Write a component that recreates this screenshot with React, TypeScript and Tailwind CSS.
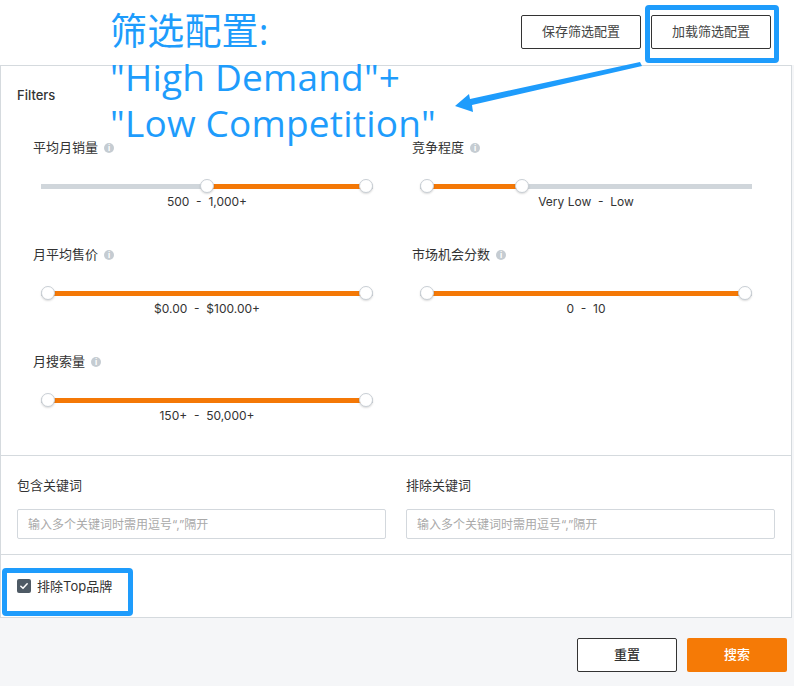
import React from 'react'

const ui = { fontFamily: 'Inter, "Noto Sans CJK SC", sans-serif' }

type SliderProps = {
  label: string
  from: number
  to: number
  text: string
}

const sliders: SliderProps[] = [
  { label: '平均月销量', from: 50, to: 100, text: '500  -  1,000+' },
  { label: '竞争程度', from: 0, to: 30, text: 'Very Low  -  Low' },
  { label: '月平均售价', from: 0, to: 100, text: '$0.00  -  $100.00+' },
  { label: '市场机会分数', from: 0, to: 100, text: '0  -  10' },
  { label: '月搜索量', from: 0, to: 100, text: '150+  -  50,000+' },
]

function InfoIcon() {
  return (
    <span className="ml-[6px] inline-flex h-[10px] w-[10px] items-center justify-center rounded-full bg-[#c5ccd2] text-[8px] font-bold leading-none text-white">
      i
    </span>
  )
}

function RangeSlider({ label, from, to, text }: SliderProps) {
  return (
    <div>
      <div className="flex h-[20px] items-center text-[13px] text-[#333]">
        <span>{label}</span>
        <InfoIcon />
      </div>
      <div className="mx-2 mt-[21px]">
        <div className="relative h-[14px]">
          <div className="absolute left-0 right-0 top-[5px] h-[5px] bg-[#d0d6db]" />
          <div className="absolute left-[7px] right-[7px] top-0 h-[14px]">
            <div
              className="absolute top-[5px] h-[5px] bg-[#f47806]"
              style={{ left: `${from}%`, width: `${to - from}%` }}
            />
            <div
              className="absolute top-0 h-[14px] w-[14px] -translate-x-1/2 rounded-full border border-[#c9cfd5] bg-white shadow-[0_1px_2px_rgba(0,0,0,0.15)]"
              style={{ left: `${from}%` }}
            />
            <div
              className="absolute top-0 h-[14px] w-[14px] -translate-x-1/2 rounded-full border border-[#c9cfd5] bg-white shadow-[0_1px_2px_rgba(0,0,0,0.15)]"
              style={{ left: `${to}%` }}
            />
          </div>
        </div>
        <div className="mt-[1px] h-[16px] whitespace-pre text-center text-[12px] leading-[16px] text-[#333]">{text}</div>
      </div>
    </div>
  )
}

function KeywordInput({ label }: { label: string }) {
  return (
    <div>
      <div className="h-[20px] text-[13px] leading-[20px] text-[#333]">{label}</div>
      <input
        className="mt-[14px] h-[30px] w-full rounded-[2px] border border-[#d3d8dd] px-[10px] text-[12px] placeholder:text-[#a9a9a9] outline-none"
        placeholder={'输入多个关键词时需用逗号“,”隔开'}
      />
    </div>
  )
}

export default function App() {
  return (
    <div className="relative min-h-[686px] w-[794px] bg-[#f5f6f8]" style={ui}>
      {/* header */}
      <div className="flex h-[65px] items-start justify-end gap-[10px] bg-white pr-[23px] pt-[15px]">
        <button className="h-[34px] w-[120px] rounded-[2px] border border-[#333] bg-white text-[13px] text-[#444]">
          保存筛选配置
        </button>
        <button className="h-[34px] w-[120px] rounded-[2px] border border-[#333] bg-white text-[13px] text-[#444]">
          加载筛选配置
        </button>
      </div>

      {/* panel */}
      <div className="w-[792px] border border-[#d5dade] bg-white">
        <div className="border-b border-[#d5dade] px-4 pb-[31px] pt-[19px]">
          <div className="h-[20px] text-[13px] font-medium leading-[20px] text-[#333]">Filters</div>
          <div className="mt-[33px] grid grid-cols-[348px_348px] gap-x-[31px] gap-y-[35px] px-4">
            {sliders.map((s) => (
              <RangeSlider key={s.label} {...s} />
            ))}
          </div>
        </div>

        <div className="grid grid-cols-2 gap-5 border-b border-[#d5dade] px-4 pb-[15px] pt-[19px]">
          <KeywordInput label="包含关键词" />
          <KeywordInput label="排除关键词" />
        </div>

        <div className="h-[62px] px-4 pt-[24px]">
          <label className="flex items-center gap-[6px] text-[13px] text-[#333]">
            <span className="flex h-[14px] w-[14px] items-center justify-center rounded-[2px] bg-[#4e5a65]">
              <svg viewBox="0 0 12 12" className="h-[10px] w-[10px]" fill="none" stroke="white" strokeWidth="1.8" strokeLinecap="round" strokeLinejoin="round">
                <path d="M2.2 6.3 4.8 8.8 9.8 3.4" />
              </svg>
            </span>
            <span className="leading-[14px]">排除Top品牌</span>
          </label>
        </div>
      </div>

      {/* footer */}
      <div className="flex justify-end gap-[10px] pr-[7px] pt-[20px]">
        <button className="h-[34px] w-[100px] rounded-[2px] border border-[#333] bg-white text-[13px] font-medium text-[#333]">
          重置
        </button>
        <button className="h-[34px] w-[100px] rounded-[2px] bg-[#f57a06] text-[13px] font-medium text-white">
          搜索
        </button>
      </div>

      {/* annotation overlay */}
      <div
        className="pointer-events-none absolute left-[110px] top-[8px] text-[37px] leading-[46px] tracking-[0.2px] text-[#1e9cfc]"
        style={{ fontFamily: '"Open Sans", "Noto Sans CJK SC", sans-serif' }}
      >
        <div>筛选配置:</div>
        <div>"High Demand"+</div>
        <div>"Low Competition"</div>
      </div>
      <svg className="pointer-events-none absolute left-0 top-0" width="794" height="686">
        <polygon points="640,62 642,66 472,105 473,112 455,106 469,94 470,99" fill="#1e9cfc" />
      </svg>
      <div className="pointer-events-none absolute left-[645px] top-[5px] h-[58px] w-[134px] rounded-[4px] border-[5px] border-[#1e9cfc]" />
      <div className="pointer-events-none absolute left-[2px] top-[568px] h-[48px] w-[131px] rounded-[4px] border-[5px] border-[#1e9cfc]" />
    </div>
  )
}
